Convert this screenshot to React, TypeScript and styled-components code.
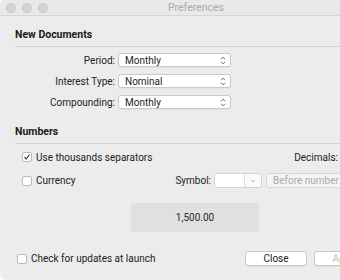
import React from "react";
import styled, { createGlobalStyle } from "styled-components";

const GlobalStyle = createGlobalStyle`
  html, body {
    margin: 0;
    padding: 0;
    background: #ffffff;
    overflow: hidden;
  }
  body {
    font-family: "Roboto", "Liberation Sans", sans-serif;
    font-size: 10px;
    color: #222222;
  }
`;

const Window = styled.div`
  width: 392px;
  height: 280px;
  background: #ececec;
  border-radius: 5px 5px 6px 6px;
  display: flex;
  flex-direction: column;
  overflow: hidden;
`;

const TitleBar = styled.div`
  height: 15px;
  flex: none;
  display: flex;
  align-items: center;
  position: relative;
  padding-left: 6px;
  gap: 6px;
  background: #e9e9e9;
  border-bottom: 1px solid #d6d6d6;
`;

const Light = styled.span`
  width: 8px;
  height: 8px;
  border-radius: 50%;
  background: #d4d4d4;
  border: 0.5px solid #c6c6c6;
`;

const Title = styled.div`
  position: absolute;
  inset: 0;
  display: flex;
  align-items: center;
  justify-content: center;
  color: #a9a9a9;
  font-size: 10.5px;
`;

const Content = styled.div`
  padding: 0 0 0 15px;
  display: flex;
  flex-direction: column;
`;

const SectionHeader = styled.div<{ $top: number }>`
  margin-top: ${({ $top }) => $top}px;
  font-weight: 700;
  font-size: 10.5px;
  line-height: 14px;
  color: #1a1a1a;
  padding-bottom: 4px;
  border-bottom: 1px solid #d3d3d3;
`;

const FormGrid = styled.div`
  display: grid;
  grid-template-columns: 100px 113px;
  column-gap: 3px;
  row-gap: 7px;
  margin-top: 6px;
  align-items: center;
`;

const Label = styled.div`
  text-align: right;
  white-space: nowrap;
`;

const Popup = styled.div`
  height: 14px;
  background: #ffffff;
  border: 1px solid #c9c9c9;
  border-radius: 3px;
  box-shadow: 0 0.5px 0.5px rgba(0, 0, 0, 0.08);
  display: flex;
  align-items: center;
  justify-content: space-between;
  padding: 0 4px 0 6px;
  box-sizing: border-box;
`;

const Chevrons = () => (
  <svg width="6" height="9" viewBox="0 0 6 9">
    <path
      d="M1 3.2 L3 1.2 L5 3.2 M1 5.8 L3 7.8 L5 5.8"
      fill="none"
      stroke="#555"
      strokeWidth="0.9"
    />
  </svg>
);

const CheckRow = styled.div<{ $indent?: number }>`
  display: flex;
  align-items: center;
  height: 14px;
  padding-left: ${({ $indent }) => $indent ?? 7}px;
`;

const Box = styled.span`
  width: 10px;
  height: 10px;
  box-sizing: border-box;
  background: #ffffff;
  border: 1px solid #b9b9b9;
  border-radius: 2px;
  margin-right: 4px;
  display: flex;
  align-items: center;
  justify-content: center;
  flex: none;
`;

const Tick = () => (
  <svg width="8" height="8" viewBox="0 0 8 8">
    <path d="M1.5 4.2 L3.2 6 L6.5 1.5" fill="none" stroke="#333" strokeWidth="1.1" />
  </svg>
);

const NumbersRow = styled.div<{ $top: number }>`
  display: flex;
  align-items: center;
  margin-top: ${({ $top }) => $top}px;
`;

const Spacer = styled.div<{ $width?: number }>`
  flex: ${({ $width }) => ($width ? "none" : "1")};
  width: ${({ $width }) => $width ?? 0}px;
`;

const RightLabel = styled.div<{ $right?: number }>`
  margin-right: ${({ $right }) => $right ?? 0}px;
  white-space: nowrap;
`;

const Combo = styled.div`
  display: flex;
  height: 15px;
  width: 48px;
  margin-left: 3px;
  border: 1px solid #d3d3d3;
  border-radius: 3px;
  box-sizing: border-box;
  background: #fafafa;
  overflow: hidden;
`;

const ComboField = styled.div`
  flex: 1;
  background: #ffffff;
  border-right: 1px solid #dedede;
`;

const ComboButton = styled.div`
  width: 16px;
  display: flex;
  align-items: center;
  justify-content: center;
`;

const Disabled = styled.div`
  height: 15px;
  width: 110px;
  margin-left: 4px;
  border: 1px solid #d7d7d7;
  border-radius: 3px;
  box-sizing: border-box;
  background: #f4f4f4;
  color: #ababab;
  display: flex;
  align-items: center;
  padding-left: 6px;
  white-space: nowrap;
`;

const Preview = styled.div`
  margin: 15px 0 0 116px;
  width: 128px;
  height: 29px;
  background: #e0e0e0;
  border-radius: 2px;
  display: flex;
  align-items: center;
  justify-content: center;
  color: #2a2a2a;
`;

const Footer = styled.div`
  display: flex;
  align-items: center;
  margin-top: 19px;
`;

const Button = styled.button<{ $disabled?: boolean }>`
  height: 15px;
  width: 62px;
  margin-left: 7px;
  padding: 0;
  font: inherit;
  background: #ffffff;
  border: 1px solid #c8c8c8;
  border-radius: 3px;
  box-shadow: 0 0.5px 0.5px rgba(0, 0, 0, 0.1);
  color: ${({ $disabled }) => ($disabled ? "#c2c2c2" : "#222")};
  flex: none;
`;

export default function App() {
  return (
    <>
      <GlobalStyle />
      <Window>
        <TitleBar>
          <Light />
          <Light />
          <Light />
          <Title>Preferences</Title>
        </TitleBar>
        <Content>
          <SectionHeader $top={12}>New Documents</SectionHeader>
          <FormGrid>
            <Label>Period:</Label>
            <Popup>
              Monthly <Chevrons />
            </Popup>
            <Label>Interest Type:</Label>
            <Popup>
              Nominal <Chevrons />
            </Popup>
            <Label>Compounding:</Label>
            <Popup>
              Monthly <Chevrons />
            </Popup>
          </FormGrid>
          <SectionHeader $top={16}>Numbers</SectionHeader>
          <NumbersRow $top={6}>
            <CheckRow>
              <Box>
                <Tick />
              </Box>
              Use thousands separators
            </CheckRow>
            <Spacer />
            <RightLabel $right={54}>Decimals:</RightLabel>
          </NumbersRow>
          <NumbersRow $top={9}>
            <CheckRow>
              <Box />
              Currency
            </CheckRow>
            <Spacer />
            <RightLabel>Symbol:</RightLabel>
            <Combo>
              <ComboField />
              <ComboButton>
                <svg width="6" height="4" viewBox="0 0 6 4">
                  <path d="M1 1 L3 3 L5 1" fill="none" stroke="#a8a8a8" strokeWidth="0.9" />
                </svg>
              </ComboButton>
            </Combo>
            <Disabled>Before number</Disabled>
            <Spacer $width={16} />
          </NumbersRow>
          <Preview>1,500.00</Preview>
          <Footer>
            <CheckRow $indent={2}>
              <Box />
              Check for updates at launch
            </CheckRow>
            <Spacer />
            <Button>Close</Button>
            <Button $disabled>Apply</Button>
            <Spacer $width={16} />
          </Footer>
        </Content>
      </Window>
    </>
  );
}
